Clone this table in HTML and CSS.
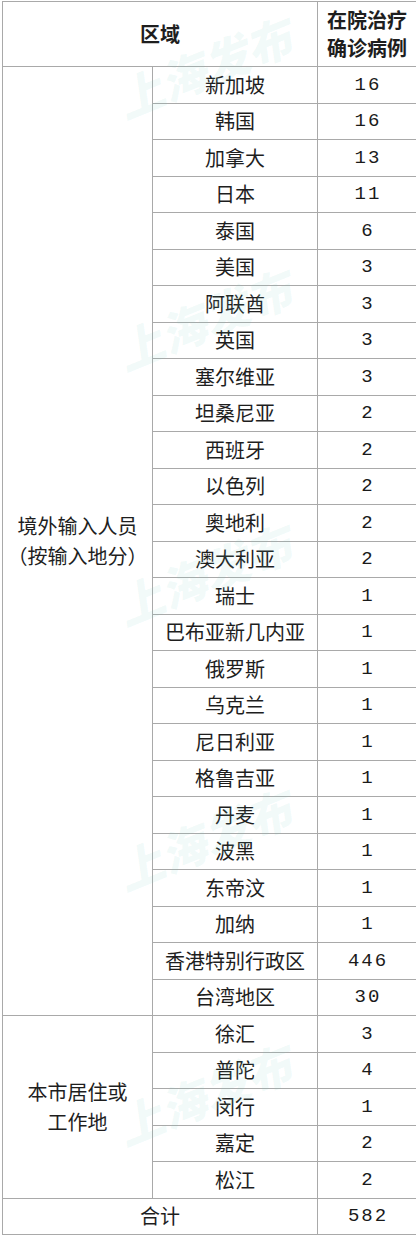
FILE: index.html
```html
<!DOCTYPE html>
<html lang="zh">
<head>
<meta charset="utf-8">
<link rel="stylesheet" href="styles.css">
</head>
<body>
<div class="sheet">
<table class="tbl">
<colgroup><col class="c1"><col class="c2"><col class="c3"></colgroup>
<tr class="head"><th colspan="2">区域</th><th>在院治疗<br>确诊病例</th></tr>
<tr><td class="grp" rowspan="26">境外输入人员<br>（按输入地分）</td><td>新加坡</td><td class="num">16</td></tr>
<tr><td>韩国</td><td class="num">16</td></tr>
<tr><td>加拿大</td><td class="num">13</td></tr>
<tr><td>日本</td><td class="num">11</td></tr>
<tr><td>泰国</td><td class="num">6</td></tr>
<tr><td>美国</td><td class="num">3</td></tr>
<tr><td>阿联酋</td><td class="num">3</td></tr>
<tr><td>英国</td><td class="num">3</td></tr>
<tr><td>塞尔维亚</td><td class="num">3</td></tr>
<tr><td>坦桑尼亚</td><td class="num">2</td></tr>
<tr><td>西班牙</td><td class="num">2</td></tr>
<tr><td>以色列</td><td class="num">2</td></tr>
<tr><td>奥地利</td><td class="num">2</td></tr>
<tr><td>澳大利亚</td><td class="num">2</td></tr>
<tr><td>瑞士</td><td class="num">1</td></tr>
<tr><td>巴布亚新几内亚</td><td class="num">1</td></tr>
<tr><td>俄罗斯</td><td class="num">1</td></tr>
<tr><td>乌克兰</td><td class="num">1</td></tr>
<tr><td>尼日利亚</td><td class="num">1</td></tr>
<tr><td>格鲁吉亚</td><td class="num">1</td></tr>
<tr><td>丹麦</td><td class="num">1</td></tr>
<tr><td>波黑</td><td class="num">1</td></tr>
<tr><td>东帝汶</td><td class="num">1</td></tr>
<tr><td>加纳</td><td class="num">1</td></tr>
<tr><td>香港特别行政区</td><td class="num">446</td></tr>
<tr><td>台湾地区</td><td class="num">30</td></tr>
<tr><td class="grp" rowspan="5">本市居住或<br>工作地</td><td>徐汇</td><td class="num">3</td></tr>
<tr><td>普陀</td><td class="num">4</td></tr>
<tr><td>闵行</td><td class="num">1</td></tr>
<tr><td>嘉定</td><td class="num">2</td></tr>
<tr><td>松江</td><td class="num">2</td></tr>
<tr class="total"><td colspan="2">合计</td><td class="num">582</td></tr>
</table>
<span class="wm wm1">上海发布</span>
<span class="wm wm2">上海发布</span>
<span class="wm wm3">上海发布</span>
<span class="wm wm4">上海发布</span>
<span class="wm wm5">上海发布</span>
</div>
</body>
</html>
```
FILE: styles.css
```css
html, body {
  margin: 0;
  padding: 0;
  background: #ffffff;
}
body {
  font-family: "Noto Sans CJK SC", "Noto Sans", sans-serif;
  color: #1e1e1e;
}
.sheet {
  position: relative;
  padding: 1px 0 0 2px;
  width: 414px;
  overflow: hidden;
}
.tbl {
  border-collapse: collapse;
  width: 414px;
  table-layout: fixed;
}
.c1 { width: 150px; }
.c2 { width: 165px; }
.c3 { width: 99px; }
.tbl th, .tbl td {
  border: 1px solid #a9a9a9;
  padding: 0;
  text-align: center;
  vertical-align: middle;
  font-size: 20px;
  line-height: 28px;
  font-weight: 400;
  height: 35.5px;
}
.tbl .head th {
  height: 64px;
  font-weight: 700;
}
.tbl td.grp {
  line-height: 30px;
}
.tbl td.num {
  font-family: "Liberation Mono", "DejaVu Sans Mono", monospace;
  font-size: 19px;
  letter-spacing: 2px;
  padding-left: 2px;
  color: #1a1a1a;
}
.tbl .total td {
  height: 35px;
}
.wm {
  position: absolute;
  left: 118px;
  font-family: "Noto Sans CJK SC", sans-serif;
  font-size: 46px;
  font-weight: 900;
  font-style: italic;
  color: rgba(120, 210, 200, 0.11);
  transform: rotate(-22deg);
  transform-origin: left center;
  white-space: nowrap;
  pointer-events: none;
}
.wm1 { top: 68px; }
.wm2 { top: 320px; }
.wm3 { top: 575px; }
.wm4 { top: 840px; }
.wm5 { top: 1095px; }
```
